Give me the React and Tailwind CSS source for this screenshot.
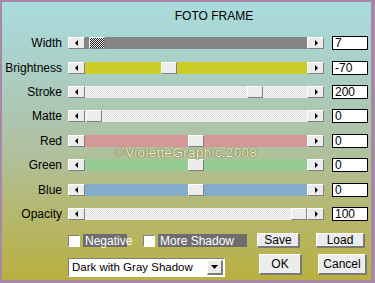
import React from "react";

const LeftBtn = () => (
  <div className="w-[17px] h-[12px] bg-[#ececec] border-t border-l border-t-white border-l-white border-b border-r border-b-[#808080] border-r-[#808080] flex items-center justify-center shrink-0">
    <svg width="4" height="6" viewBox="0 0 4 6"><path d="M3 0 L0 3 L3 6 Z" fill="#000" /></svg>
  </div>
);
const RightBtn = () => (
  <div className="w-[17px] h-[12px] bg-[#ececec] border-t border-l border-t-white border-l-white border-b border-r border-b-[#808080] border-r-[#808080] flex items-center justify-center shrink-0">
    <svg width="4" height="6" viewBox="0 0 4 6"><path d="M1 0 L4 3 L1 6 Z" fill="#000" /></svg>
  </div>
);

const Thumb = ({ left, checker }) => (
  <div
    className={
      "absolute top-0 w-[16px] h-[12px] border-t border-l border-t-white border-l-white border-b border-r border-b-[#808080] border-r-[#808080] " +
      (checker
        ? "bg-[repeating-conic-gradient(#222_0_25%,#eee_0_50%)] bg-[length:2px_2px]"
        : "bg-[#ececec]")
    }
    style={{ left }}
  />
);

const rows = [
  { label: "Width", track: "bg-[#858585]", thumb: 4, checker: true, value: "7" },
  { label: "Brightness", track: "bg-[#cccc28]", thumb: 76, value: "-70" },
  { label: "Stroke", track: "light", thumb: 162, value: "200" },
  { label: "Matte", track: "light", thumb: 1, value: "0" },
  { label: "Red", track: "bg-[#d49898]", thumb: 103, value: "0" },
  { label: "Green", track: "bg-[#94cc94]", thumb: 103, value: "0" },
  { label: "Blue", track: "bg-[#84aacc]", thumb: 103, value: "0" },
  { label: "Opacity", track: "light", thumb: 206, value: "100" },
];

const Row = ({ r }) => (
  <div className="flex items-center h-[24.4px]">
    <div className="w-[61px] text-right text-[12px] text-black pr-[1px] leading-none">{r.label}</div>
    <div className="ml-[5px] flex items-center">
      <LeftBtn />
      <div
        className={
          "relative w-[222px] h-[12px] " +
          (r.track === "light"
            ? "bg-[repeating-conic-gradient(#dcdcdc_0_25%,#fafafa_0_50%)] bg-[length:2px_2px]"
            : r.track)
        }
      >
        <Thumb left={r.thumb} checker={r.checker} />
      </div>
      <RightBtn />
    </div>
    <div className="ml-[8px] w-[36px] h-[14px] bg-white border border-black flex items-center pl-[2px] text-[12px] leading-none">
      {r.value}
    </div>
  </div>
);

const WinBtn = ({ children, className = "" }) => (
  <div
    className={
      "bg-[#ececec] border-t border-l border-t-white border-l-white border-b-2 border-r-2 border-b-[#7a7a7a] border-r-[#7a7a7a] flex items-center justify-center text-[12px] leading-none text-black " +
      className
    }
  >
    {children}
  </div>
);

const Check = ({ label, w }) => (
  <div className="flex items-center">
    <div className="w-[12px] h-[12px] bg-white border-t border-l border-t-[#808080] border-l-[#808080] border-b border-r border-b-white border-r-white" />
    <div className={"ml-[3px] h-[13px] bg-[#6e6e6e] text-white text-[12px] leading-none flex items-center pl-[2px] " + w}>
      {label}
    </div>
  </div>
);

export default function App() {
  return (
    <div
      className="w-[375px] h-[283px] border-l-2 border-t-2 border-r-4 border-b-[3px] border-[#a888a8] bg-[linear-gradient(180deg,#a8dcdc_0%,#aad4d0_15%,#acc8b4_38%,#b0c09c_55%,#b4b870_75%,#bab040_100%)] relative overflow-hidden"
      style={{ fontFamily: '"Liberation Sans", Arial, sans-serif' }}
    >
      <div className="pt-[8px] pl-[64px] w-[360px] text-center text-[12px] font-normal leading-none h-[29px]">FOTO FRAME</div>
      <div className="flex flex-col">
        {rows.map((r) => (
          <Row key={r.label} r={r} />
        ))}
      </div>
      <div className="flex items-center pl-[66px] mt-[7px]">
        <Check label="Negative" w="w-[44px]" />
        <div className="ml-[16px]">
          <Check label="More Shadow" w="w-[89px]" />
        </div>
        <WinBtn className="ml-[10px] w-[43px] h-[15px]">Save</WinBtn>
        <WinBtn className="ml-[16px] w-[49px] h-[15px]">Load</WinBtn>
      </div>
      <div className="flex items-start pl-[66px] mt-[6px]">
        <div className="mt-[4px] w-[157px] h-[19px] bg-white border-t border-l border-t-[#808080] border-l-[#808080] border-b border-r border-b-white border-r-white flex items-center justify-between pl-[3px] pr-[1px]">
          <span className="text-[11.5px] leading-none">Dark with Gray Shadow</span>
          <WinBtn className="w-[16px] h-[15px]">
            <svg width="7" height="4" viewBox="0 0 7 4"><path d="M0 0 L7 0 L3.5 4 Z" fill="#000" /></svg>
          </WinBtn>
        </div>
        <WinBtn className="ml-[34px] w-[43px] h-[21px]">OK</WinBtn>
        <WinBtn className="ml-[16px] w-[49px] h-[21px]">Cancel</WinBtn>
      </div>
      <div
        className="absolute left-[113px] top-[144px] text-[13.5px] leading-none text-[#f4f0c8] tracking-[0.3px]"
        style={{ textShadow: "0 0 1px #5a5a30, 0 0 1px #5a5a30" }}
      >
        ©VioletteGraphic.2008
      </div>
    </div>
  );
}
